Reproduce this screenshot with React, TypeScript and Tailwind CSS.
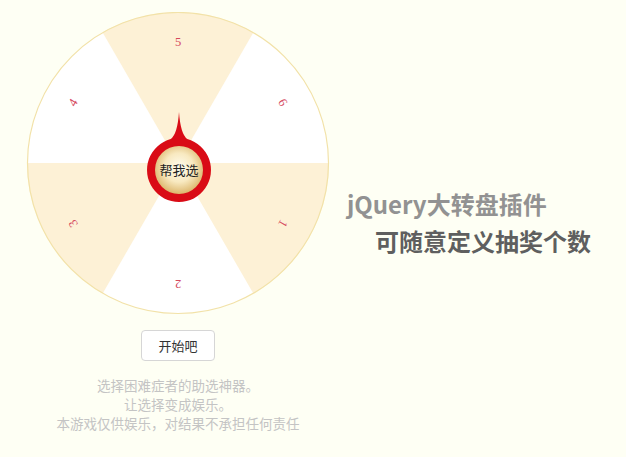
import React from 'react';

const CX = 152;
const CY = 151;
const R = 151;

// point on the rim, angle in degrees clockwise from +x
const rim = (deg: number) => {
  const a = (deg * Math.PI) / 180;
  return `${(CX + R * Math.cos(a)).toFixed(2)},${(CY + R * Math.sin(a)).toFixed(2)}`;
};

const sector = (from: number, to: number) =>
  `M${CX},${CY} L${rim(from)} A${R},${R} 0 0 1 ${rim(to)} Z`;

const PRIZES = ['5', '6', '1', '2', '3', '4'];

const Wheel: React.FC = () => (
  <svg width="304" height="304" viewBox="0 0 304 304">
    <defs>
      <radialGradient id="hub" cx="50%" cy="45%" r="55%">
        <stop offset="0%" stopColor="#fffdf0" />
        <stop offset="55%" stopColor="#f8e9c0" />
        <stop offset="100%" stopColor="#dcb66c" />
      </radialGradient>
    </defs>
    <circle cx={CX} cy={CY} r={R} fill="#ffffff" />
    <path d={sector(240, 300)} fill="#fdf1d6" />
    <path d={sector(120, 180)} fill="#fdf1d6" />
    <path d={sector(0, 60)} fill="#fdf1d6" />
    <circle cx={CX} cy={CY} r={R - 0.5} fill="none" stroke="#f2e2a8" strokeWidth="1.2" />
    {PRIZES.map((p, i) => (
      <text
        key={p}
        x={CX}
        y={CY - 117}
        transform={`rotate(${i * 60} ${CX} ${CY})`}
        textAnchor="middle"
        fontFamily="'Liberation Serif', serif"
        fontSize="12.5"
        fill="#d5485c"
      >
        {p}
      </text>
    ))}
    {/* pointer: thin spike flaring into the ring */}
    <path
      d="M153,100 Q154.5,122 161.3,127.1 A32,32 0 1 1 144.7,127.1 Q151.5,122 153,100 Z"
      fill="#d90b16"
    />
    <circle cx="153" cy="158" r="24" fill="url(#hub)" />
    <text
      x="153"
      y="162.5"
      textAnchor="middle"
      fontFamily="'Noto Sans CJK SC', sans-serif"
      fontSize="13"
      fill="#222222"
    >
      帮我选
    </text>
  </svg>
);

export default function App() {
  return (
    <div className="flex h-[457px] w-full bg-[#fefff4] font-['Noto_Sans_CJK_SC',sans-serif]">
      <div className="ml-[26px] mt-[12px] flex w-[304px] flex-col items-center">
        <Wheel />
        <button className="mt-[14px] h-[31px] w-[74px] rounded-[4px] border border-[#d6d6d6] bg-white text-[13px] text-[#333]">
          开始吧
        </button>
        <div className="mt-[15px] flex flex-col items-center text-[13.5px] leading-[19px] text-[#c4c4c4]">
          <p>选择困难症者的助选神器。</p>
          <p>让选择变成娱乐。</p>
          <p>本游戏仅供娱乐，对结果不承担任何责任</p>
        </div>
      </div>
      <div className="ml-[17px] flex flex-col pt-[189px]">
        <h1 className="text-[24px] font-bold leading-[30px] text-[#929292]">jQuery大转盘插件</h1>
        <h2 className="mt-[7px] pl-[28px] text-[24px] font-bold leading-[30px] text-[#5f5f5f]">
          可随意定义抽奖个数
        </h2>
      </div>
    </div>
  );
}
